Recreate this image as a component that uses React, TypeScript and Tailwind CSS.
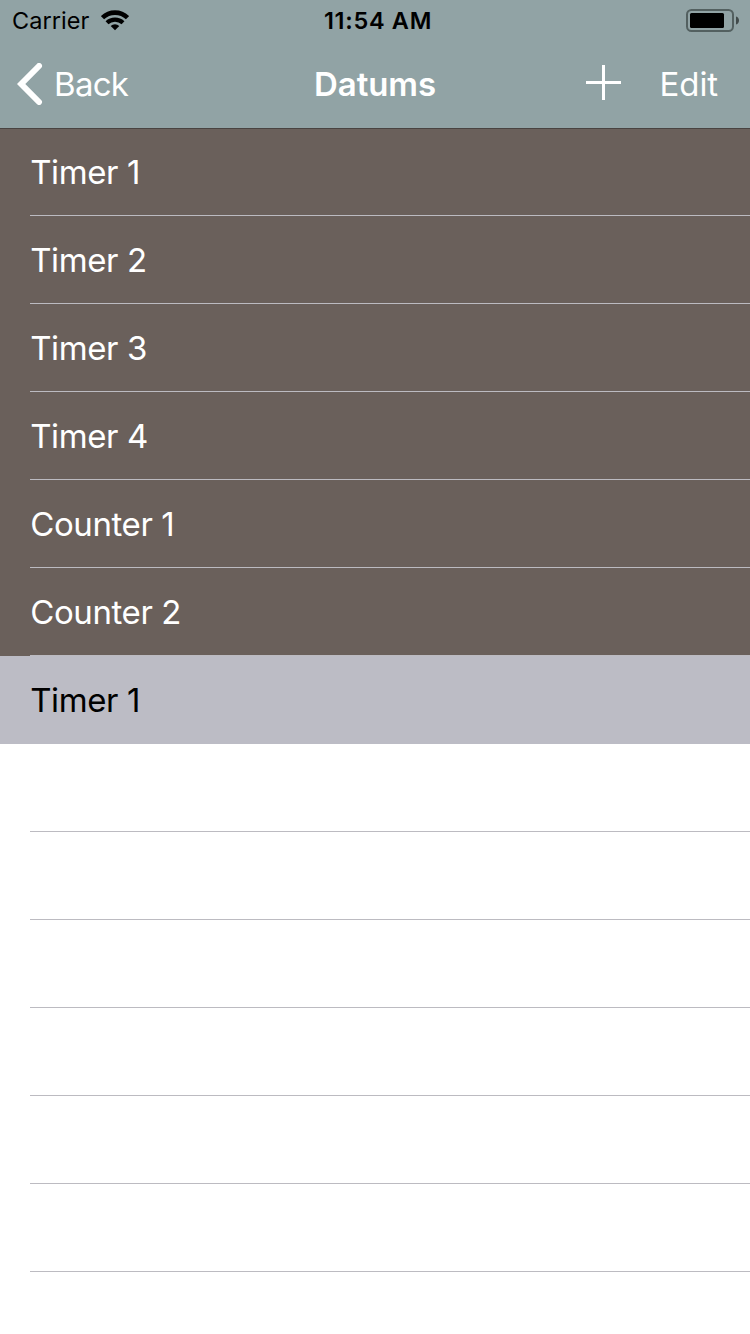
const filled = ["Timer 1", "Timer 2", "Timer 3", "Timer 4", "Counter 1", "Counter 2"];

export default function App() {
  return (
    <div className="flex h-[1334px] w-[750px] flex-col overflow-hidden bg-white font-['Inter',sans-serif]">
      <header className="flex h-[129px] shrink-0 flex-col border-b border-[#494341] bg-[#91a3a5]">
        <div className="grid h-10 grid-cols-[1fr_auto_1fr] items-center pl-3 pr-[11px] text-black">
          <div className="flex items-center gap-3">
            <span className="pt-px text-[23.5px] leading-10 tracking-[0.05px]">Carrier</span>
            <svg width="28" height="21" viewBox="0 0 28 21" fill="none" stroke="#000" strokeWidth="4.6">
              <path d="M1.5 7.7a18 18 0 0 1 25 0" />
              <path d="M6 12.8a11.6 11.6 0 0 1 16 0" strokeWidth="4.2" />
              <path d="M14 20.3l-4.3-4.4a6.2 6.2 0 0 1 8.6 0z" fill="#000" stroke="none" />
            </svg>
          </div>
          <span className="pl-[5px] pt-px text-[23.5px] font-semibold leading-10 tracking-[0.7px]">11:54 AM</span>
          <svg className="mt-px justify-self-end" width="53" height="24" viewBox="0 0 53 24">
            <rect x="1" y="1" width="46" height="21" rx="4.5" fill="none" stroke="#536060" strokeWidth="2" />
            <rect x="4" y="4" width="34" height="15" rx="1.5" />
            <path d="M50 7.5c4 1 4 7 0 8z" fill="#414a4a" />
          </svg>
        </div>
        <nav className="grid h-[88px] grid-cols-[1fr_auto_1fr] items-center pl-[17px] pr-8 text-[33px] text-white">
          <div className="flex items-center gap-[11px]">
            <svg width="26" height="42" viewBox="0 0 26 42" fill="none" stroke="#fff" strokeWidth="6" strokeLinecap="round">
              <path d="M22 3L4.2 21 22 39" />
            </svg>
            <span className="pt-0.5 tracking-[-0.7px]">Back</span>
          </div>
          <span className="pl-[15px] pt-0.5 font-semibold tracking-[-0.1px]">Datums</span>
          <div className="flex items-center justify-end gap-[39px]">
            <svg className="-mt-[3px]" width="35" height="35" viewBox="0 0 35 35" stroke="#fff" strokeWidth="3">
              <path d="M0 17.5h35M17.5 0v35" />
            </svg>
            <span className="pt-0.5 tracking-[-0.1px]">Edit</span>
          </div>
        </nav>
      </header>
      <ul className="text-[33px] tracking-[-0.4px] text-white">
        {filled.map((label) => (
          <li key={label} className="flex h-[88px] flex-col bg-[#6a605b] pl-[30px] first:h-[87px]">
            <span className="flex flex-1 items-center border-b border-[#bcbbc1] pl-[0.2px] pt-0.5">{label}</span>
          </li>
        ))}
        <li className="flex h-[88px] items-center bg-[#bcbcc5] pl-[30.2px] pt-px text-black">Timer 1</li>
        {[1, 2, 3, 4, 5, 6].map((n) => (
          <li key={n} className="ml-[30px] h-[88px] border-b border-[#bcbbc1]" />
        ))}
      </ul>
    </div>
  );
}
